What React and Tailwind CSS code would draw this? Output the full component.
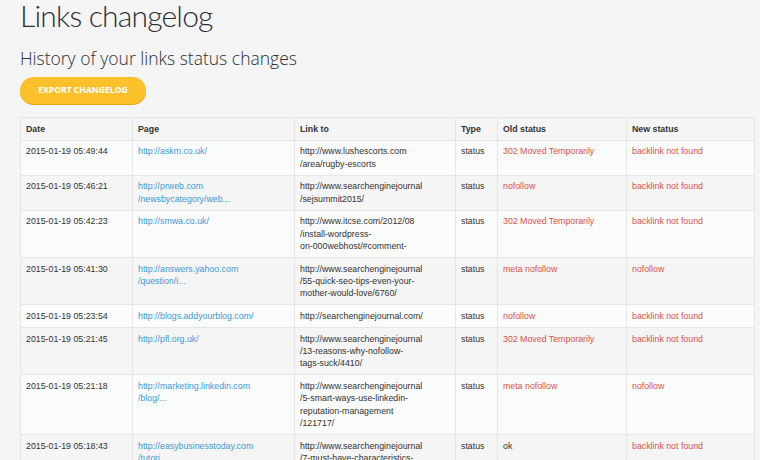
import React from 'react'

const rows = [
  {
    date: '2015-01-19 05:49:44',
    page: ['http://askm.co.uk/'],
    link: ['http://www.lushescorts.com', '/area/rugby-escorts'],
    oldStatus: '302 Moved Temporarily',
    newStatus: 'backlink not found',
  },
  {
    date: '2015-01-19 05:46:21',
    page: ['http://prweb.com', '/newsbycategory/web...'],
    link: ['http://www.searchenginejournal', '/sejsummit2015/'],
    oldStatus: 'nofollow',
    newStatus: 'backlink not found',
  },
  {
    date: '2015-01-19 05:42:23',
    page: ['http://smwa.co.uk/'],
    link: ['http://www.itcse.com/2012/08', '/install-wordpress-', 'on-000webhost/#comment-'],
    oldStatus: '302 Moved Temporarily',
    newStatus: 'backlink not found',
  },
  {
    date: '2015-01-19 05:41:30',
    page: ['http://answers.yahoo.com', '/question/i...'],
    link: ['http://www.searchenginejournal', '/55-quick-seo-tips-even-your-', 'mother-would-love/6760/'],
    oldStatus: 'meta nofollow',
    newStatus: 'nofollow',
  },
  {
    date: '2015-01-19 05:23:54',
    page: ['http://blogs.addyourblog.com/'],
    link: ['http://searchenginejournal.com/'],
    oldStatus: 'nofollow',
    newStatus: 'backlink not found',
  },
  {
    date: '2015-01-19 05:21:45',
    page: ['http://pfl.org.uk/'],
    link: ['http://www.searchenginejournal', '/13-reasons-why-nofollow-', 'tags-suck/4410/'],
    oldStatus: '302 Moved Temporarily',
    newStatus: 'backlink not found',
  },
  {
    date: '2015-01-19 05:21:18',
    page: ['http://marketing.linkedin.com', '/blog/...'],
    link: ['http://www.searchenginejournal', '/5-smart-ways-use-linkedin-', 'reputation-management', '/121717/'],
    oldStatus: 'meta nofollow',
    newStatus: 'nofollow',
  },
  {
    date: '2015-01-19 05:18:43',
    page: ['http://easybusinesstoday.com', '/tutori...'],
    link: ['http://www.searchenginejournal', '/7-must-have-characteristics-', 'of-a-successful-blog/'],
    oldStatus: 'ok',
    newStatus: 'backlink not found',
  },
]

const cell = 'border border-[#e6e6e6] px-[5px] py-[4.6px] align-top overflow-hidden whitespace-nowrap'

export default function App() {
  return (
    <div className="min-h-screen bg-[#f5f5f5] pl-5 pr-[6px] text-[#333]">
      <h1
        className="text-[30px] leading-[31px] font-light tracking-[-0.8px] text-[#2b2f38]"
        style={{ fontFamily: 'Lato, "Open Sans", sans-serif' }}
      >
        Links changelog
      </h1>
      <h2
        className="mt-[16px] text-[17.5px] leading-[22px] font-light text-[#2b2f38]"
        style={{ fontFamily: '"Open Sans", sans-serif' }}
      >
        History of your links status changes
      </h2>
      <button
        className="mt-[8px] h-[27px] w-[126px] rounded-full bg-[#fcc12b] text-[8.6px] font-bold text-white uppercase shadow-[0_1px_0_#e0a815]"
        style={{ fontFamily: '"Open Sans", sans-serif' }}
      >
        Export changelog
      </button>

      <table
        className="mt-[13px] w-[734px] table-fixed border-collapse text-[8.8px] leading-[12.4px] text-[#333]"
        style={{ fontFamily: '"Liberation Sans", Arial, sans-serif' }}
      >
        <colgroup>
          <col className="w-[112px]" />
          <col className="w-[162px]" />
          <col className="w-[161px]" />
          <col className="w-[42px]" />
          <col className="w-[129px]" />
          <col className="w-[128px]" />
        </colgroup>
        <thead>
          <tr className="bg-[#f5f5f5] text-left">
            <th className={`${cell} font-bold`}>Date</th>
            <th className={`${cell} font-bold`}>Page</th>
            <th className={`${cell} font-bold`}>Link to</th>
            <th className={`${cell} font-bold`}>Type</th>
            <th className={`${cell} font-bold`}>Old status</th>
            <th className={`${cell} font-bold`}>New status</th>
          </tr>
        </thead>
        <tbody>
          {rows.map((r, i) => (
            <tr key={i} className={i % 2 === 0 ? 'bg-[#fafbfb]' : 'bg-[#f5f5f5]'}>
              <td className={cell}>{r.date}</td>
              <td className={`${cell} text-[#3d9ad8]`}>
                {r.page.map((l) => (
                  <div key={l}>{l}</div>
                ))}
              </td>
              <td className={cell}>
                {r.link.map((l) => (
                  <div key={l}>{l}</div>
                ))}
              </td>
              <td className={cell}>status</td>
              <td className={`${cell} ${r.oldStatus === 'ok' ? 'text-[#333]' : 'text-[#d9534f]'}`}>
                {r.oldStatus}
              </td>
              <td className={`${cell} text-[#d9534f]`}>{r.newStatus}</td>
            </tr>
          ))}
        </tbody>
      </table>
    </div>
  )
}
